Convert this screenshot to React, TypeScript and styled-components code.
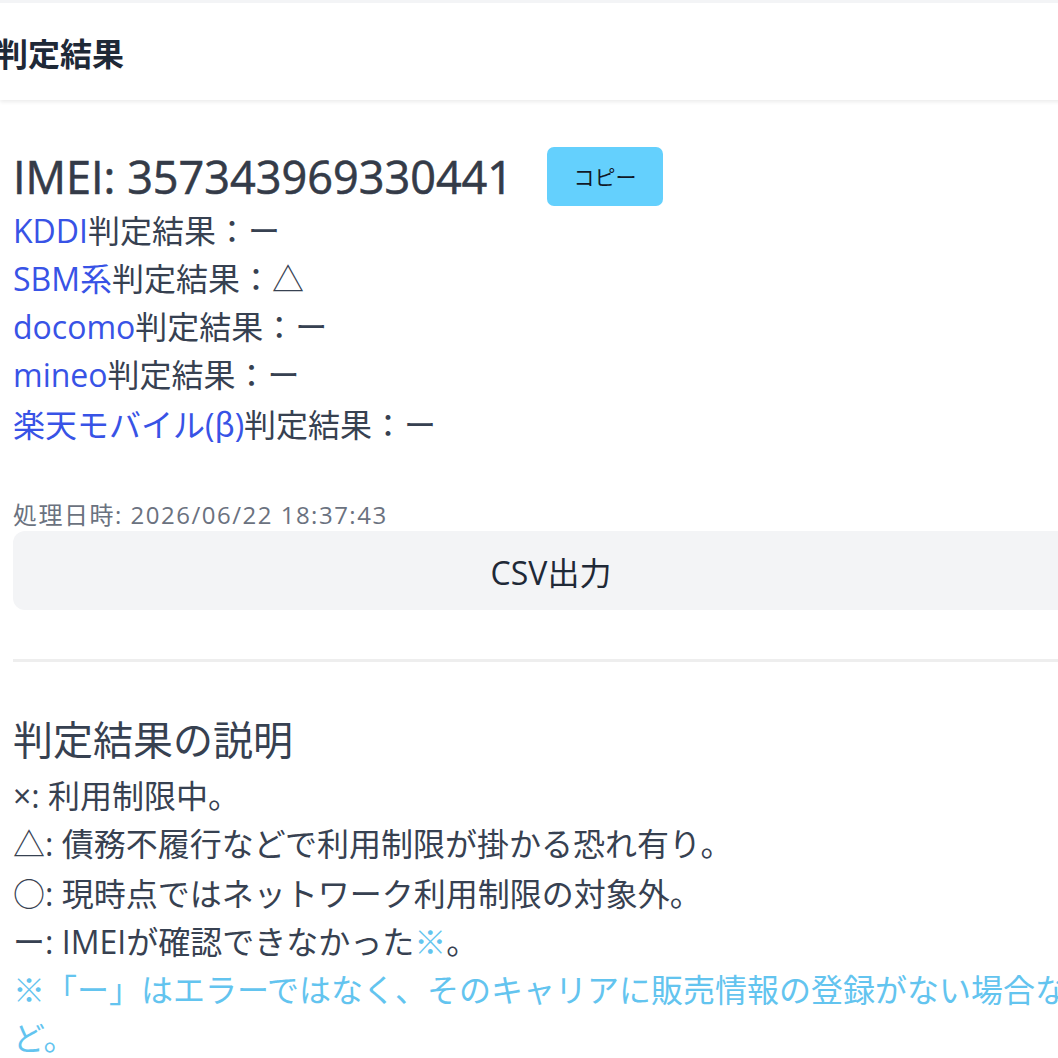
import React from "react";
import styled, { createGlobalStyle } from "styled-components";

const GlobalStyle = createGlobalStyle`
  html, body {
    margin: 0;
    padding: 0;
    background: #fff;
    overflow: hidden;
  }
  body {
    font-family: "Open Sans", "Noto Sans CJK JP", sans-serif;
    color: #374151;
  }
`;

const Page = styled.div`
  width: 1102px;
`;

const Header = styled.header`
  height: 97px;
  display: flex;
  align-items: center;
  border-top: 3px solid #f3f4f6;
  box-shadow: 0 2px 4px rgba(0, 0, 0, 0.08);
  background: #fff;
`;

const HeaderTitle = styled.h1`
  margin: 0 0 0 -4px;
  font-size: 32px;
  font-weight: 700;
  color: #1f2937;
`;

const Main = styled.main`
  padding: 45px 13px 0;
`;

const ImeiRow = styled.div`
  display: flex;
  align-items: center;
  gap: 34px;
  height: 62px;
`;

const Imei = styled.h2`
  margin: 0;
  font-size: 45px;
  font-weight: 400;
  color: #343b48;
  -webkit-text-stroke: 0.6px #343b48;
`;

const CopyButton = styled.button`
  width: 116px;
  height: 59px;
  border: none;
  border-radius: 7px;
  background: #64d0fd;
  color: #111827;
  font-family: inherit;
  font-size: 21px;
`;

const ResultList = styled.ul`
  list-style: none;
  margin: 0;
  padding: 0;
`;

const ResultItem = styled.li`
  font-size: 32px;
  line-height: 48px;
`;

const Carrier = styled.a`
  color: #3853e6;
  text-decoration: none;
`;

const Beta = styled.span`
  font-family: "Noto Sans CJK JP", sans-serif;
`;

const Processed = styled.p`
  margin: 50px 0 0;
  font-size: 24px;
  line-height: 32px;
  letter-spacing: 1.5px;
  color: #6b7280;
`;

const CsvButton = styled.button`
  display: block;
  width: 100%;
  height: 79px;
  border: none;
  border-radius: 12px;
  background: #f3f4f6;
  color: #1f2937;
  font-family: inherit;
  font-size: 32px;
`;

const Divider = styled.hr`
  margin: 49px 0 0;
  border: none;
  height: 3px;
  background: #eeeeee;
`;

const Legend = styled.section`
  margin-top: 50px;
`;

const LegendTitle = styled.h3`
  margin: 0 0 4px;
  font-size: 40px;
  font-weight: 400;
  line-height: 56px;
`;

const LegendLine = styled.p<{ $note?: boolean }>`
  margin: 0;
  font-size: 32px;
  line-height: 48px;
  color: ${p => (p.$note ? "#63c4ef" : "#374151")};
`;

const Symbol = styled.span`
  font-family: "Noto Sans CJK JP", sans-serif;
`;

const Mark = styled.span`
  color: #63c4ef;
`;

const carriers = [
  { name: "KDDI", result: "ー" },
  { name: "SBM系", result: "△" },
  { name: "docomo", result: "ー" },
  { name: "mineo", result: "ー" }
];

export default function App() {
  return (
    <Page>
      <GlobalStyle />
      <Header>
        <HeaderTitle>判定結果</HeaderTitle>
      </Header>
      <Main>
        <ImeiRow>
          <Imei>IMEI: 357343969330441</Imei>
          <CopyButton>コピー</CopyButton>
        </ImeiRow>
        <ResultList>
          {carriers.map(c => (
            <ResultItem key={c.name}>
              <Carrier href="#">{c.name}</Carrier>判定結果：{c.result}
            </ResultItem>
          ))}
          <ResultItem>
            <Carrier href="#">
              楽天モバイル(<Beta>β</Beta>)
            </Carrier>
            判定結果：ー
          </ResultItem>
        </ResultList>
        <Processed>処理日時: 2026/06/22 18:37:43</Processed>
        <CsvButton>CSV出力</CsvButton>
        <Divider />
        <Legend>
          <LegendTitle>判定結果の説明</LegendTitle>
          <LegendLine>×: 利用制限中。</LegendLine>
          <LegendLine>△: 債務不履行などで利用制限が掛かる恐れ有り。</LegendLine>
          <LegendLine>
            <Symbol>○</Symbol>: 現時点ではネットワーク利用制限の対象外。
          </LegendLine>
          <LegendLine>
            ー: IMEIが確認できなかった<Mark>※</Mark>。
          </LegendLine>
          <LegendLine $note>
            ※「ー」はエラーではなく、そのキャリアに販売情報の登録がない場合など。
          </LegendLine>
        </Legend>
      </Main>
    </Page>
  );
}
